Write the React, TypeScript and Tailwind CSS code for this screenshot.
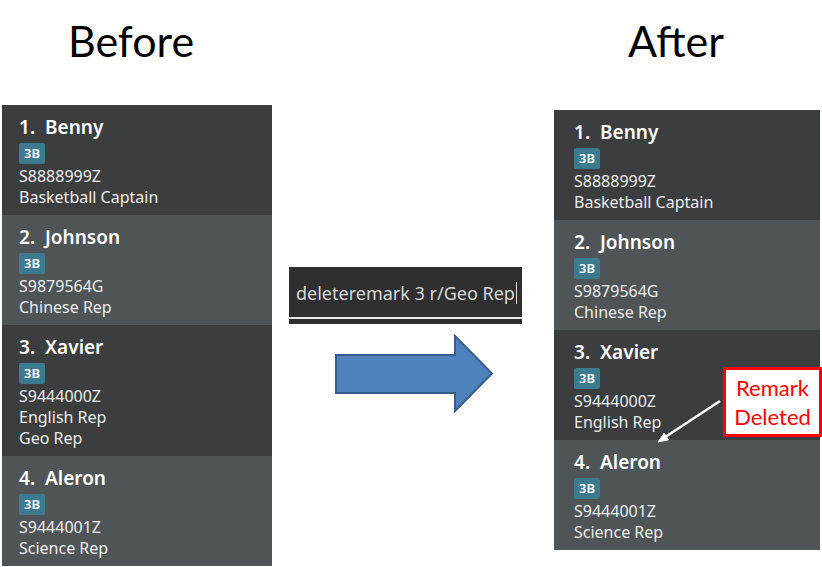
import React from 'react';

type Person = {
  name: string;
  id: string;
  remarks: string[];
};

const before: Person[] = [
  { name: 'Benny', id: 'S8888999Z', remarks: ['Basketball Captain'] },
  { name: 'Johnson', id: 'S9879564G', remarks: ['Chinese Rep'] },
  { name: 'Xavier', id: 'S9444000Z', remarks: ['English Rep', 'Geo Rep'] },
  { name: 'Aleron', id: 'S9444001Z', remarks: ['Science Rep'] },
];

const after: Person[] = [
  { name: 'Benny', id: 'S8888999Z', remarks: ['Basketball Captain'] },
  { name: 'Johnson', id: 'S9879564G', remarks: ['Chinese Rep'] },
  { name: 'Xavier', id: 'S9444000Z', remarks: ['English Rep'] },
  { name: 'Aleron', id: 'S9444001Z', remarks: ['Science Rep'] },
];

function PersonCard({ person, index, inset }: { person: Person; index: number; inset: string }) {
  const bg = index % 2 === 0 ? 'bg-[#3c3d3f]' : 'bg-[#4f5557]';
  return (
    <div className={`${bg} ${inset} pt-[8px] pb-[7px] text-[#ececec] font-['Noto_Sans',sans-serif]`}>
      <div className="text-[19px] leading-[28px] font-semibold text-white">
        {index + 1}.&nbsp;&nbsp;{person.name}
      </div>
      <div className="mt-[2px] flex">
        <span className="h-[21px] px-[5px] rounded-[2px] bg-[#3b7a8f] text-white text-[13px] font-semibold leading-[21px]">
          3B
        </span>
      </div>
      <div className="mt-[2px] text-[16px] leading-[21px]">{person.id}</div>
      {person.remarks.map((r) => (
        <div key={r} className="text-[16px] leading-[21px]">
          {r}
        </div>
      ))}
    </div>
  );
}

export default function App() {
  return (
    <div className="relative w-[822px] h-[567px] bg-white overflow-hidden">
      <div className="flex">
        <div className="ml-[2px] w-[270px] flex flex-col">
          <div className="h-[105px] pt-[16px] pr-[12px] text-center text-[43px] leading-[50px] text-black font-['Lato',sans-serif]">
            Before
          </div>
          {before.map((p, i) => (
            <PersonCard key={p.name} person={p} index={i} inset="pl-[17px]" />
          ))}
        </div>

        <div className="w-[282px] pt-[267px] flex flex-col">
          <div className="ml-[17px] w-[233px] h-[57px] bg-[#2f2f2f] flex flex-col">
            <div className="h-[50px] pl-[7px] pt-[2px] flex items-center text-[18px] text-[#d8d8d8] font-['Noto_Sans',sans-serif]">
              <span>deleteremark 3 r/Geo Rep</span>
              <span className="ml-[1px] w-[1px] h-[22px] bg-[#dcdcdc]" />
            </div>
            <div className="h-[2px] bg-[#e8e8e8]" />
          </div>
          <svg className="ml-[62px] mt-[10px]" width="160" height="80" viewBox="0 0 160 80">
            <path
              d="M2 21 H121 V2 L158 39.5 L121 77 V59 H2 Z"
              fill="#4f81bd"
              stroke="#385d8a"
              strokeWidth="2"
              strokeLinejoin="miter"
            />
          </svg>
        </div>

        <div className="w-[266px] flex flex-col">
          <div className="h-[110px] pt-[16px] pr-[22px] text-center text-[43px] leading-[50px] text-black font-['Lato',sans-serif]">
            After
          </div>
          {after.map((p, i) => (
            <PersonCard key={p.name} person={p} index={i} inset="pl-[20px]" />
          ))}
        </div>
      </div>

      {/* annotation */}
      <svg className="absolute left-[650px] top-[395px]" width="80" height="55" viewBox="0 0 80 55">
        <line x1="70" y1="6" x2="16" y2="41.5" stroke="white" strokeWidth="2.5" />
        <polygon points="8,47 18.5,44.8 14.1,38.2" fill="white" stroke="white" strokeWidth="1" />
      </svg>
      <div className="absolute left-[723px] top-[367px] w-[99px] h-[70px] border-[3px] border-[#ff0000] bg-white flex flex-col items-center justify-center text-[#ff0000] text-[22px] leading-[29px] font-['Lato',sans-serif]">
        <span>Remark</span>
        <span>Deleted</span>
      </div>
    </div>
  );
}
